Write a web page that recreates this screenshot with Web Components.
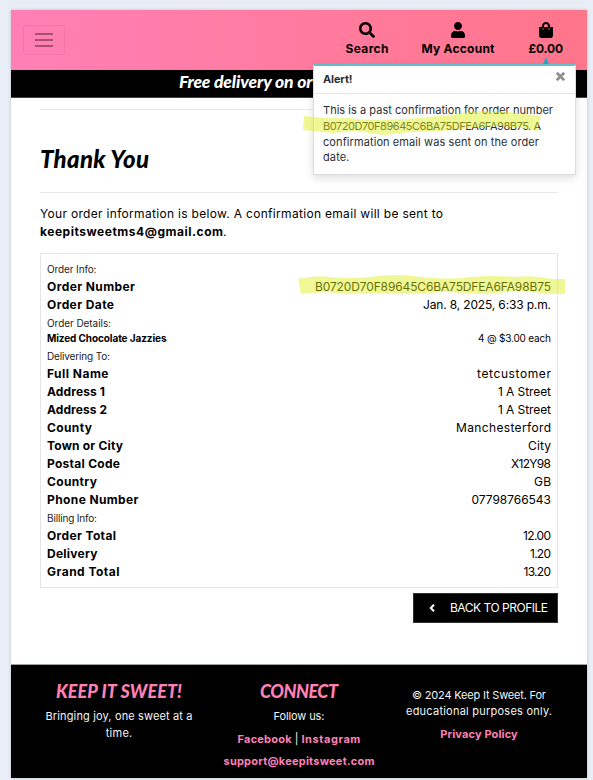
<!DOCTYPE html>
<html lang="en">
<head>
<meta charset="utf-8">
<title>Keep It Sweet</title>
<style>
html{height:780px;overflow:hidden}
body{margin:0;padding:10px 6px 2px 11px;box-sizing:border-box;height:780px;overflow:hidden;background:#e8edf6;font:12px/18px Inter,"Noto Sans",sans-serif;color:#000}
</style>
</head>
<body>
<sweet-page></sweet-page>
<script>
const define = (name, html, setup) => customElements.define(name, class extends HTMLElement {
  connectedCallback() {
    if (!this.shadowRoot) {
      const t = document.createElement('template');
      t.innerHTML = html;
      this.attachShadow({mode: 'open'}).append(t.content.cloneNode(true));
    }
    if (setup) setup(this, this.shadowRoot);
  }
});

define('sweet-page', `
<style>
:host{display:flex;flex-direction:column;position:relative;width:576px;height:768px;background:#fff;box-shadow:0 0 3px #b9bec8}
main{flex:1;padding:11px 29px 0;display:flex;flex-direction:column}
hr{margin:0;border:0;border-top:1px solid #e9e9e9;width:100%;flex:none}
h1{margin:0;height:82px;padding-top:9px;box-sizing:border-box;font:italic 900 24px/80px Lato,sans-serif}
p{margin:12px 0 12px;height:36px}
b{font-weight:700}
.actions{display:flex;justify-content:flex-end;padding-top:5px}
h1 fit-text{vertical-align:top}
</style>
<site-header></site-header>
<delivery-banner></delivery-banner>
<main>
  <hr><h1><fit-text w="109">Thank You</fit-text></h1><hr>
  <p><fit-text w="403">Your order information is below. A confirmation email will be sent to</fit-text><br><b><fit-text w="183">keepitsweetms4@gmail.com</fit-text></b>.</p>
  <order-box></order-box>
  <div class="actions"><back-button></back-button></div>
</main>
<site-footer></site-footer>
<alert-toast></alert-toast>
<marker-strokes></marker-strokes>`);

define('site-header', `
<style>
:host{display:flex;flex:none;height:60px;box-sizing:border-box;padding:0 24px 0 12px;align-items:center;justify-content:space-between;background:linear-gradient(90deg,#ff80b5,#ff758a)}
.burger{width:42px;height:30px;box-sizing:border-box;border:1px solid #ef76a6;border-radius:3px;display:flex;flex-direction:column;align-items:center;justify-content:center;gap:4px}
.burger i{width:18px;height:2px;background:#a7516f}
nav{display:flex;gap:33px;height:100%}
nav-item:last-child{margin-left:1px}
</style>
<div class="burger"><i></i><i></i><i></i></div>
<nav>
<nav-item><svg slot="icon" width="16" height="16" viewBox="0 0 512 512"><path d="M505 442.700 405.300 343c-4.500-4.500-10.600-7-17-7H372c27.600-35.300 44-79.700 44-128C416 93.100 322.900 0 208 0S0 93.100 0 208s93.100 208 208 208c48.300 0 92.700-16.400 128-44v16.300c0 6.400 2.500 12.500 7 17l99.700 99.700c9.400 9.400 24.600 9.400 33.900 0l28.300-28.300c9.400-9.400 9.400-24.600.1-34zM208 336c-70.700 0-128-57.200-128-128 0-70.700 57.200-128 128-128 70.700 0 128 57.200 128 128 0 70.700-57.200 128-128 128z"/></svg><fit-text w="43">Search</fit-text></nav-item>
<nav-item><svg slot="icon" width="14" height="16" viewBox="0 0 448 512"><path d="M224 256c70.700 0 128-57.300 128-128S294.700 0 224 0 96 57.300 96 128s57.300 128 128 128zm89.600 32h-16.700c-22.200 10.200-46.900 16-72.900 16s-50.600-5.800-72.900-16h-16.700C60.200 288 0 348.200 0 422.400V464c0 26.500 21.500 48 48 48h352c26.500 0 48-21.500 48-48v-41.600c0-74.200-60.200-134.400-134.400-134.400z"/></svg><fit-text w="73">My Account</fit-text></nav-item>
<nav-item><svg slot="icon" width="14" height="16" viewBox="0 0 448 512"><path d="M352 160v-32C352 57.420 294.579 0 224 0 153.420 0 96 57.420 96 128v32H0v272c0 44.183 35.817 80 80 80h288c44.183 0 80-35.817 80-80V160h-96zm-192-32c0-35.290 28.710-64 64-64s64 28.710 64 64v32H160v-32zm160 120c-13.255 0-24-10.745-24-24s10.745-24 24-24 24 10.745 24 24-10.745 24-24 24zm-192 0c-13.255 0-24-10.745-24-24s10.745-24 24-24 24 10.745 24 24-10.745 24-24 24z"/></svg><fit-text w="34.500">£0.00</fit-text></nav-item>
</nav>`);

define('nav-item', `
<style>
:host{display:flex;flex-direction:column;align-items:center;padding-top:12px;gap:2px;font-weight:700}
::slotted(svg){display:block;flex:none}
</style><slot name="icon"></slot><slot></slot>`);

define('delivery-banner', `
<style>
:host{display:block;flex:none;height:28px;box-sizing:border-box;padding-left:168px;background:#000;border-bottom:1px solid #444;color:#fff;font:italic 900 17.500px/24px Lato,sans-serif}
</style><fit-text w="133.500">Free delivery on or</fit-text>`);

define('order-box', `
<style>
:host{display:block;flex:none;box-sizing:border-box;border:1px solid #e5e5e5;padding:6px;height:335px}
h2{margin:0;height:18px;box-sizing:border-box;font-size:10px;line-height:18px;font-weight:400;color:#222}
</style>
<h2><fit-text w="49.500">Order Info:</fit-text></h2>
<order-row k="Order Number" kw="88" v="B0720D70F89645C6BA75DFEA6FA98B75" vw="236"></order-row>
<order-row k="Order Date" kw="67" v="Jan. 8, 2025, 6:33 p.m." vw="128"></order-row>
<h2><fit-text w="64">Order Details:</fit-text></h2>
<order-row small k="Mized Chocolate Jazzies" kw="119.500" v="4 @ $3.00 each" vw="73"></order-row>
<h2><fit-text w="63">Delivering To:</fit-text></h2>
<order-row k="Full Name" kw="61.500" v="tetcustomer" vw="74"></order-row>
<order-row k="Address 1" kw="58" v="1 A Street" vw="53"></order-row>
<order-row k="Address 2" kw="60" v="1 A Street" vw="53"></order-row>
<order-row k="County" kw="45" v="Manchesterford" vw="95"></order-row>
<order-row k="Town or City" kw="76" v="City" vw="23"></order-row>
<order-row k="Postal Code" kw="73" v="X12Y98" vw="40"></order-row>
<order-row k="Country" kw="50" v="GB" vw="17"></order-row>
<order-row k="Phone Number" kw="91.500" v="07798766543" vw="79.500"></order-row>
<h2><fit-text w="50">Billing Info:</fit-text></h2>
<order-row k="Order Total" kw="69" v="12.00" vw="28"></order-row>
<order-row k="Delivery" kw="50.500" v="1.20" vw="21"></order-row>
<order-row k="Grand Total" kw="72.500" v="13.20" vw="27.500"></order-row>`);

define('order-row', `
<style>
:host{display:flex;justify-content:space-between;height:18px}
:host([small]){height:15px;font-size:10px;line-height:13px}
.k{font-weight:700}
</style><fit-text class="k"></fit-text><fit-text class="v"></fit-text>`, (el, root) => {
  for (const c of ['k', 'v']) {
    const t = root.querySelector('.' + c);
    t.setAttribute('w', el.getAttribute(c + 'w'));
    t.textContent = el.getAttribute(c);
  }
});

define('back-button', `
<style>
:host{display:flex;align-items:center;width:145px;height:30px;box-sizing:border-box;background:#000;border:1px solid #333;color:#fff;padding:0 9px 0 15px;justify-content:space-between}
</style>
<svg width="6" height="8" viewBox="0 0 6 8" fill="none" stroke="#fff" stroke-width="2"><path d="M5 .8 1.800 4 5 7.200"/></svg>
<fit-text w="98">BACK TO PROFILE</fit-text>`);

define('site-footer', `
<style>
:host{display:grid;flex:none;grid-template-columns:repeat(3,180px);justify-content:center;height:114px;box-sizing:border-box;border-top:1px solid #9aa3a2;background:#000;color:#f4f4f4;font-size:11px;line-height:17px;text-align:center}
h3{margin:16px 0 6px;font:italic 900 18px/21px Lato,sans-serif;color:#ff80b5}
p{margin:0 0 5px}
b{color:#ff80b5;font-weight:700}
.legal{padding-top:22px;line-height:16px}
.legal p{margin-bottom:7px}
</style>
<div><h3><fit-text w="126">KEEP IT SWEET!</fit-text></h3><p><fit-text w="147">Bringing joy, one sweet at a</fit-text><br><fit-text w="26.500">time.</fit-text></p></div>
<div><h3><fit-text w="78">CONNECT</fit-text></h3><p><fit-text w="51">Follow us:</fit-text></p><p style="margin-top:6px"><b><fit-text w="54">Facebook</fit-text></b> | <b><fit-text w="59">Instagram</fit-text></b></p><p><b><fit-text w="151">support@keepitsweet.com</fit-text></b></p></div>
<div class="legal"><p><fit-text w="134">© 2024 Keep It Sweet. For</fit-text><br><fit-text w="146">educational purposes only.</fit-text></p><p><b><fit-text w="77.500">Privacy Policy</fit-text></b></p></div>`);

define('alert-toast', `
<style>
:host{display:block;position:absolute;left:302px;top:54px;width:263px;height:111px;box-sizing:border-box;background:#fff;border:1px solid #dcdcdc;border-top:2px solid #5fbfcd;box-shadow:0 3px 8px #0002;font-size:11px;color:#2b2f33}
.tip{position:absolute;right:26px;top:-9px;width:0;border:3.500px solid transparent;border-bottom:7px solid #2ba3b7;border-top:0}
header{display:flex;justify-content:space-between;height:28px;box-sizing:border-box;border-bottom:1px solid #e6e6e6;padding:4px 9px 0;font-weight:700}
header svg{margin-top:2px}
.msg{padding:9px 9px;line-height:15.800px}
</style>
<i class="tip"></i>
<header><fit-text w="29.500">Alert!</fit-text><svg width="11" height="9" viewBox="0 0 11 9" stroke="#8d9093" stroke-width="2.800"><path d="m1.800.8 7.400 7.400M9.200.8 1.800 8.200"/></svg></header>
<div class="msg"><fit-text w="230">This is a past confirmation for order number</fit-text><br><fit-text w="218">B0720D70F89645C6BA75DFEA6FA98B75. A</fit-text><br><fit-text w="216">confirmation email was sent on the order</fit-text><br><fit-text w="26.500">date.</fit-text></div>`);

/* Highlighter strokes laid over the order numbers */
define('marker-strokes', `
<style>
:host{position:absolute;left:0;top:0;width:576px;height:300px;pointer-events:none}
svg{display:block}
</style>
<svg width="576" height="300" viewBox="11 10 576 300" fill="#ddf014" fill-opacity=".45">
<path d="M304 116 Q329 119 350 118 Q366 120 374 120 L405 119 419 118 449 115 478 111 507 111.500 541 116 537 131 521 128 499 126 472 128 442 131 410 132 384 135 355 131 333 133 303 130Z"/>
<path d="M298 279 Q315 275 331 277 Q350 279 370 277 Q395 273 422 277 Q448 280 470 277 Q495 275 515 277 Q535 275 552 279 H565V294 H552 L520 291 485 294 445 292 405 294 375 293 345 294 325 292 301 294Z"/>
</svg>`);

/* Inline run of text tracked so that it fills exactly the width in its "w" attribute */
define('fit-text', `
<style>
:host{display:inline-block;white-space:nowrap;text-align:left;vertical-align:top}
span{display:inline-block;vertical-align:top}
</style><span><slot></slot></span>`, (el, root) => {
  const w = parseFloat(el.getAttribute('w'));
  const span = root.querySelector('span');
  const n = el.textContent.length;
  const ls = (w - span.getBoundingClientRect().width) / (n - 1);
  span.style.letterSpacing = ls + 'px';
  span.style.marginRight = -ls + 'px';
  el.style.width = w + 'px';
});
</script>
</body>
</html>
